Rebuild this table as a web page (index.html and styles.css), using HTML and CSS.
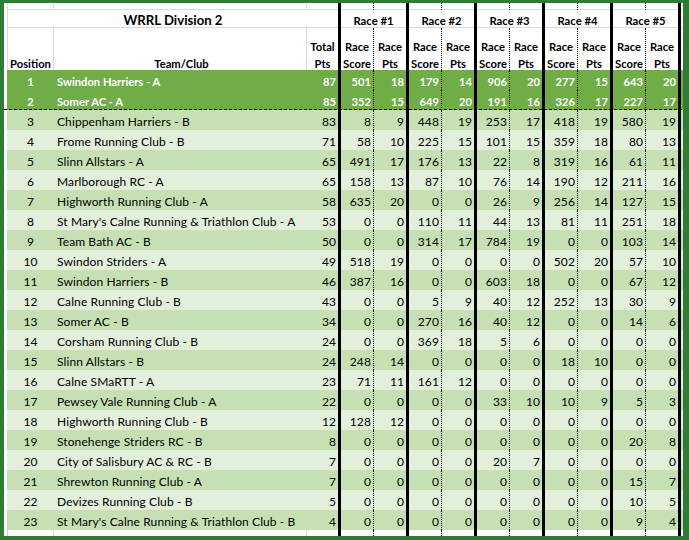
FILE: index.html
```html
<!DOCTYPE html>
<html>
<head>
<meta charset="utf-8">
<title>WRRL Division 2</title>
<link rel="stylesheet" href="styles.css">
</head>
<body>
<div class="frame">
  <div class="sheet">
    <div class="row stub">
      <span class="c0"></span><span class="pos"></span><span class="team"></span><span class="tot"></span>
      <span class="sc"></span><span class="pt"></span><span class="sc"></span><span class="pt"></span><span class="sc"></span><span class="pt"></span><span class="sc"></span><span class="pt"></span><span class="sc"></span><span class="pt"></span>
      <span class="tail"></span>
    </div>
    <div class="row title-row">
      <span class="c0"></span>
      <span class="title">WRRL Division 2</span>
      <span class="race">Race #1</span>
      <span class="race">Race #2</span>
      <span class="race">Race #3</span>
      <span class="race">Race #4</span>
      <span class="race">Race #5</span>
      <span class="tail"></span>
    </div>
    <div class="row hdr">
      <span class="c0"></span><span class="pos">Position</span><span class="team">Team/Club</span><span class="tot">Total<br>Pts</span>
      <span class="sc">Race<br>Score</span><span class="pt">Race<br>Pts</span>
      <span class="sc">Race<br>Score</span><span class="pt">Race<br>Pts</span>
      <span class="sc">Race<br>Score</span><span class="pt">Race<br>Pts</span>
      <span class="sc">Race<br>Score</span><span class="pt">Race<br>Pts</span>
      <span class="sc">Race<br>Score</span><span class="pt">Race<br>Pts</span>
      <span class="tail"></span>
    </div>

    <div class="row lead"><span class="c0"></span><span class="pos">1</span><span class="team">Swindon Harriers - A</span><span class="tot">87</span><span class="sc">501</span><span class="pt">18</span><span class="sc">179</span><span class="pt">14</span><span class="sc">906</span><span class="pt">20</span><span class="sc">277</span><span class="pt">15</span><span class="sc">643</span><span class="pt">20</span><span class="tail"></span></div>
    <div class="row lead last-lead"><span class="c0"></span><span class="pos">2</span><span class="team">Somer AC - A</span><span class="tot">85</span><span class="sc">352</span><span class="pt">15</span><span class="sc">649</span><span class="pt">20</span><span class="sc">191</span><span class="pt">16</span><span class="sc">326</span><span class="pt">17</span><span class="sc">227</span><span class="pt">17</span><span class="tail"></span></div>

    <div class="row dark"><span class="c0"></span><span class="pos">3</span><span class="team">Chippenham Harriers - B</span><span class="tot">83</span><span class="sc">8</span><span class="pt">9</span><span class="sc">448</span><span class="pt">19</span><span class="sc">253</span><span class="pt">17</span><span class="sc">418</span><span class="pt">19</span><span class="sc">580</span><span class="pt">19</span><span class="tail"></span></div>
    <div class="row light"><span class="c0"></span><span class="pos">4</span><span class="team">Frome Running Club - B</span><span class="tot">71</span><span class="sc">58</span><span class="pt">10</span><span class="sc">225</span><span class="pt">15</span><span class="sc">101</span><span class="pt">15</span><span class="sc">359</span><span class="pt">18</span><span class="sc">80</span><span class="pt">13</span><span class="tail"></span></div>
    <div class="row dark"><span class="c0"></span><span class="pos">5</span><span class="team">Slinn Allstars - A</span><span class="tot">65</span><span class="sc">491</span><span class="pt">17</span><span class="sc">176</span><span class="pt">13</span><span class="sc">22</span><span class="pt">8</span><span class="sc">319</span><span class="pt">16</span><span class="sc">61</span><span class="pt">11</span><span class="tail"></span></div>
    <div class="row light"><span class="c0"></span><span class="pos">6</span><span class="team">Marlborough RC - A</span><span class="tot">65</span><span class="sc">158</span><span class="pt">13</span><span class="sc">87</span><span class="pt">10</span><span class="sc">76</span><span class="pt">14</span><span class="sc">190</span><span class="pt">12</span><span class="sc">211</span><span class="pt">16</span><span class="tail"></span></div>
    <div class="row dark"><span class="c0"></span><span class="pos">7</span><span class="team">Highworth Running Club - A</span><span class="tot">58</span><span class="sc">635</span><span class="pt">20</span><span class="sc">0</span><span class="pt">0</span><span class="sc">26</span><span class="pt">9</span><span class="sc">256</span><span class="pt">14</span><span class="sc">127</span><span class="pt">15</span><span class="tail"></span></div>
    <div class="row light"><span class="c0"></span><span class="pos">8</span><span class="team">St Mary's Calne Running &amp; Triathlon Club - A</span><span class="tot">53</span><span class="sc">0</span><span class="pt">0</span><span class="sc">110</span><span class="pt">11</span><span class="sc">44</span><span class="pt">13</span><span class="sc">81</span><span class="pt">11</span><span class="sc">251</span><span class="pt">18</span><span class="tail"></span></div>
    <div class="row dark"><span class="c0"></span><span class="pos">9</span><span class="team">Team Bath AC - B</span><span class="tot">50</span><span class="sc">0</span><span class="pt">0</span><span class="sc">314</span><span class="pt">17</span><span class="sc">784</span><span class="pt">19</span><span class="sc">0</span><span class="pt">0</span><span class="sc">103</span><span class="pt">14</span><span class="tail"></span></div>
    <div class="row light"><span class="c0"></span><span class="pos">10</span><span class="team">Swindon Striders - A</span><span class="tot">49</span><span class="sc">518</span><span class="pt">19</span><span class="sc">0</span><span class="pt">0</span><span class="sc">0</span><span class="pt">0</span><span class="sc">502</span><span class="pt">20</span><span class="sc">57</span><span class="pt">10</span><span class="tail"></span></div>
    <div class="row dark"><span class="c0"></span><span class="pos">11</span><span class="team">Swindon Harriers - B</span><span class="tot">46</span><span class="sc">387</span><span class="pt">16</span><span class="sc">0</span><span class="pt">0</span><span class="sc">603</span><span class="pt">18</span><span class="sc">0</span><span class="pt">0</span><span class="sc">67</span><span class="pt">12</span><span class="tail"></span></div>
    <div class="row light"><span class="c0"></span><span class="pos">12</span><span class="team">Calne Running Club - B</span><span class="tot">43</span><span class="sc">0</span><span class="pt">0</span><span class="sc">5</span><span class="pt">9</span><span class="sc">40</span><span class="pt">12</span><span class="sc">252</span><span class="pt">13</span><span class="sc">30</span><span class="pt">9</span><span class="tail"></span></div>
    <div class="row dark"><span class="c0"></span><span class="pos">13</span><span class="team">Somer AC - B</span><span class="tot">34</span><span class="sc">0</span><span class="pt">0</span><span class="sc">270</span><span class="pt">16</span><span class="sc">40</span><span class="pt">12</span><span class="sc">0</span><span class="pt">0</span><span class="sc">14</span><span class="pt">6</span><span class="tail"></span></div>
    <div class="row light"><span class="c0"></span><span class="pos">14</span><span class="team">Corsham Running Club - B</span><span class="tot">24</span><span class="sc">0</span><span class="pt">0</span><span class="sc">369</span><span class="pt">18</span><span class="sc">5</span><span class="pt">6</span><span class="sc">0</span><span class="pt">0</span><span class="sc">0</span><span class="pt">0</span><span class="tail"></span></div>
    <div class="row dark"><span class="c0"></span><span class="pos">15</span><span class="team">Slinn Allstars - B</span><span class="tot">24</span><span class="sc">248</span><span class="pt">14</span><span class="sc">0</span><span class="pt">0</span><span class="sc">0</span><span class="pt">0</span><span class="sc">18</span><span class="pt">10</span><span class="sc">0</span><span class="pt">0</span><span class="tail"></span></div>
    <div class="row light"><span class="c0"></span><span class="pos">16</span><span class="team">Calne SMaRTT - A</span><span class="tot">23</span><span class="sc">71</span><span class="pt">11</span><span class="sc">161</span><span class="pt">12</span><span class="sc">0</span><span class="pt">0</span><span class="sc">0</span><span class="pt">0</span><span class="sc">0</span><span class="pt">0</span><span class="tail"></span></div>
    <div class="row dark"><span class="c0"></span><span class="pos">17</span><span class="team">Pewsey Vale Running Club - A</span><span class="tot">22</span><span class="sc">0</span><span class="pt">0</span><span class="sc">0</span><span class="pt">0</span><span class="sc">33</span><span class="pt">10</span><span class="sc">10</span><span class="pt">9</span><span class="sc">5</span><span class="pt">3</span><span class="tail"></span></div>
    <div class="row light"><span class="c0"></span><span class="pos">18</span><span class="team">Highworth Running Club - B</span><span class="tot">12</span><span class="sc">128</span><span class="pt">12</span><span class="sc">0</span><span class="pt">0</span><span class="sc">0</span><span class="pt">0</span><span class="sc">0</span><span class="pt">0</span><span class="sc">0</span><span class="pt">0</span><span class="tail"></span></div>
    <div class="row dark"><span class="c0"></span><span class="pos">19</span><span class="team">Stonehenge Striders RC - B</span><span class="tot">8</span><span class="sc">0</span><span class="pt">0</span><span class="sc">0</span><span class="pt">0</span><span class="sc">0</span><span class="pt">0</span><span class="sc">0</span><span class="pt">0</span><span class="sc">20</span><span class="pt">8</span><span class="tail"></span></div>
    <div class="row light"><span class="c0"></span><span class="pos">20</span><span class="team">City of Salisbury AC &amp; RC - B</span><span class="tot">7</span><span class="sc">0</span><span class="pt">0</span><span class="sc">0</span><span class="pt">0</span><span class="sc">20</span><span class="pt">7</span><span class="sc">0</span><span class="pt">0</span><span class="sc">0</span><span class="pt">0</span><span class="tail"></span></div>
    <div class="row dark"><span class="c0"></span><span class="pos">21</span><span class="team">Shrewton Running Club - A</span><span class="tot">7</span><span class="sc">0</span><span class="pt">0</span><span class="sc">0</span><span class="pt">0</span><span class="sc">0</span><span class="pt">0</span><span class="sc">0</span><span class="pt">0</span><span class="sc">15</span><span class="pt">7</span><span class="tail"></span></div>
    <div class="row light"><span class="c0"></span><span class="pos">22</span><span class="team">Devizes Running Club - B</span><span class="tot">5</span><span class="sc">0</span><span class="pt">0</span><span class="sc">0</span><span class="pt">0</span><span class="sc">0</span><span class="pt">0</span><span class="sc">0</span><span class="pt">0</span><span class="sc">10</span><span class="pt">5</span><span class="tail"></span></div>
    <div class="row dark"><span class="c0"></span><span class="pos">23</span><span class="team">St Mary's Calne Running &amp; Triathlon Club - B</span><span class="tot">4</span><span class="sc">0</span><span class="pt">0</span><span class="sc">0</span><span class="pt">0</span><span class="sc">0</span><span class="pt">0</span><span class="sc">0</span><span class="pt">0</span><span class="sc">9</span><span class="pt">4</span><span class="tail"></span></div>

    <div class="row stub bottom">
      <span class="c0"></span><span class="pos"></span><span class="team"></span><span class="tot"></span>
      <span class="sc"></span><span class="pt"></span><span class="sc"></span><span class="pt"></span><span class="sc"></span><span class="pt"></span><span class="sc"></span><span class="pt"></span><span class="sc"></span><span class="pt"></span>
      <span class="tail"></span>
    </div>
  </div>
</div>
</body>
</html>
```
FILE: styles.css
```css
:root {
  --grid: #d9d9d9;
  --frame: #2f7d35;
  --lead: #70ad47;
  --dark: #c6e0b4;
  --light: #e2efda;
}

* { box-sizing: border-box; }

html, body {
  margin: 0;
  padding: 0;
}

body {
  background: var(--frame);
  width: 689px;
  height: 540px;
  overflow: hidden;
  font-family: Lato, "Open Sans", sans-serif;
  font-size: 12px;
  letter-spacing: 0.1px;
  color: #000;
}

.frame {
  padding: 3px 6px 4px 4px;
}

.sheet {
  width: 679px;
  height: 533px;
  background: #fff;
  overflow: hidden;
}

.row {
  display: grid;
  grid-template-columns: 3px 47px 253px 31px repeat(5, 36px 32px) 5px;
  height: 20px;
}

.row > span {
  display: block;
  white-space: nowrap;
  overflow: hidden;
  line-height: 16px;
  padding-top: 4px;
}

.c0 { background: #fff; }

.pos { text-align: center; }
.team { padding-left: 3px; }
.tot, .sc, .pt { text-align: right; padding-right: 2px; }

.sc {
  border-left: 3px solid #000;
  border-right: 1px dotted #000;
}

.tail { border-left: 3px solid #000; }

/* stub rows (partially visible sheet rows) */
.stub {
  height: 7px;
  background: linear-gradient(var(--grid), var(--grid)) bottom / 100% 1px no-repeat #fff;
}
.stub.bottom {
  height: 6px;
  background: #fff;
}
.stub .pos, .hdr .pos {
  border-left: 1px solid var(--grid);
  border-right: 1px solid var(--grid);
}
.stub .team, .hdr .team { border-right: 1px solid var(--grid); }

/* title row */
.title-row {
  height: 18px;
  background: linear-gradient(var(--grid), var(--grid)) bottom / 100% 1px no-repeat #fff;
  font-weight: 700;
  font-size: 11.3px;
  letter-spacing: 0;
}
.title-row > span { padding-top: 3px; line-height: 15px; }
.title {
  grid-column: span 3;
  text-align: center;
  font-size: 13.2px;
  border-left: 1px solid var(--grid);
}
.race {
  grid-column: span 2;
  text-align: center;
  border-left: 3px solid #000;
}

/* header row */
.hdr {
  height: 42px;
  background: #fff;
  font-weight: 700;
  font-size: 11.2px;
  letter-spacing: 0;
}
.hdr > span {
  line-height: 17px;
  padding-top: 10px;
  text-align: center;
  padding-right: 0;
}
.hdr .pos, .hdr .team { padding-top: 27px; }

/* data rows */
.lead {
  background: var(--lead);
  color: #fff;
  font-weight: 700;
  font-size: 11.2px;
  letter-spacing: 0;
}
.last-lead {
  background:
    repeating-linear-gradient(90deg, #000 0 3px, transparent 3px 5px) bottom / 100% 1px no-repeat,
    var(--lead);
}
.last-lead .c0 {
  background:
    repeating-linear-gradient(90deg, #000 0 3px, transparent 3px 5px) bottom / 100% 1px no-repeat,
    #fff;
}
.dark { background: var(--dark); }
.light { background: var(--light); }
```
